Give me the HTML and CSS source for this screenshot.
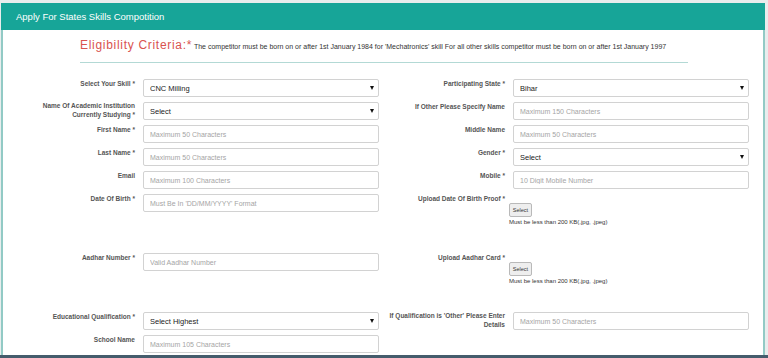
FILE: index.html
```html
<!DOCTYPE html>
<html lang="en">

<head>
    <meta charset="UTF-8">
    <meta name="viewport" content="width=device-width, initial-scale=1.0">
    <title>Apply For States Skills Compotition</title>
    <link rel="stylesheet" href="styles.css">
</head>

<body>
    <div class="panel">
        <div class="panel-head">Apply For States Skills Compotition</div>
        <div class="panel-body">
            <p class="criteria"><span class="criteria-title">Eligibility Criteria:*</span> The competitor must be born on or after 1st January 1984 for 'Mechatronics' skill For all other skills competitor must be born on or after 1st January 1997</p>
            <hr class="criteria-line">

            <form class="form">
                <!-- linha 1 -->
                <div class="field">
                    <label>Select Your Skill *</label>
                    <div class="control select-wrap">
                        <select class="input select">
                            <option>CNC Milling</option>
                        </select>
                    </div>
                </div>
                <div class="field">
                    <label>Participating State *</label>
                    <div class="control select-wrap">
                        <select class="input select">
                            <option>Bihar</option>
                        </select>
                    </div>
                </div>

                <!-- linha 2 -->
                <div class="field">
                    <label class="two-lines">Name Of Academic Institution Currently Studying *</label>
                    <div class="control select-wrap">
                        <select class="input select">
                            <option>Select</option>
                        </select>
                    </div>
                </div>
                <div class="field">
                    <label>If Other Please Specify Name</label>
                    <div class="control">
                        <input type="text" class="input" placeholder="Maximum 150 Characters">
                    </div>
                </div>

                <!-- linha 3 -->
                <div class="field">
                    <label>First Name *</label>
                    <div class="control">
                        <input type="text" class="input" placeholder="Maximum 50 Characters">
                    </div>
                </div>
                <div class="field">
                    <label>Middle Name</label>
                    <div class="control">
                        <input type="text" class="input" placeholder="Maximum 50 Characters">
                    </div>
                </div>

                <!-- linha 4 -->
                <div class="field">
                    <label>Last Name *</label>
                    <div class="control">
                        <input type="text" class="input" placeholder="Maximum 50 Characters">
                    </div>
                </div>
                <div class="field">
                    <label>Gender *</label>
                    <div class="control select-wrap">
                        <select class="input select">
                            <option>Select</option>
                        </select>
                    </div>
                </div>

                <!-- linha 5 -->
                <div class="field">
                    <label>Email</label>
                    <div class="control">
                        <input type="text" class="input" placeholder="Maximum 100 Characters">
                    </div>
                </div>
                <div class="field">
                    <label>Mobile *</label>
                    <div class="control">
                        <input type="text" class="input" placeholder="10 Digit Mobile Number">
                    </div>
                </div>

                <!-- linha 6 -->
                <div class="field tall">
                    <label>Date Of Birth *</label>
                    <div class="control">
                        <input type="text" class="input" placeholder="Must Be In 'DD/MM/YYYY' Format">
                    </div>
                </div>
                <div class="field tall">
                    <label>Upload Date Of Birth Proof *</label>
                    <div class="control upload">
                        <button type="button" class="btn-select">Select</button>
                        <span class="help">Must be less than 200 KB(.jpg, .jpeg)</span>
                    </div>
                </div>

                <!-- linha 7 -->
                <div class="field tall">
                    <label>Aadhar Number *</label>
                    <div class="control">
                        <input type="text" class="input" placeholder="Valid Aadhar Number">
                    </div>
                </div>
                <div class="field tall">
                    <label>Upload Aadhar Card *</label>
                    <div class="control upload">
                        <button type="button" class="btn-select">Select</button>
                        <span class="help">Must be less than 200 KB(.jpg, .jpeg)</span>
                    </div>
                </div>

                <!-- linha 8 -->
                <div class="field">
                    <label>Educational Qualification *</label>
                    <div class="control select-wrap">
                        <select class="input select">
                            <option>Select Highest</option>
                        </select>
                    </div>
                </div>
                <div class="field">
                    <label class="two-lines">If Qualification is 'Other' Please Enter Details</label>
                    <div class="control">
                        <input type="text" class="input" placeholder="Maximum 50 Characters">
                    </div>
                </div>

                <!-- linha 9 -->
                <div class="field">
                    <label>School Name</label>
                    <div class="control">
                        <input type="text" class="input" placeholder="Maximum 105 Characters">
                    </div>
                </div>
            </form>
        </div>
    </div>
    <div class="bottom-bar"></div>
</body>

</html>
```

FILE: styles.css
```css
body {
    margin: 0;
    background: #e8eded;
    font-family: "Liberation Sans", Arial, sans-serif;
    color: #333;
    overflow: hidden;
    height: 358px;
}

.panel {
    margin: 3px 3px 0 1px;
}

.panel-head {
    background-color: #17a598;
    color: #fff;
    height: 27px;
    line-height: 27px;
    padding-left: 15px;
    font-size: 9.5px;
}

.panel-body {
    background-color: #fff;
    border-left: 2px solid #92cac5;
    border-right: 2px solid #92cac5;
    padding: 9px 0 20px 0;
}

.criteria {
    margin: 0 0 0 77px;
    font-size: 7px;
    line-height: 12px;
    color: #333;
}

.criteria-title {
    color: #d9534f;
    font-size: 12px;
    letter-spacing: 0.7px;
}

.criteria-line {
    margin: 9px 0 0 77px;
    width: 608px;
    border: none;
    border-top: 1px solid #b3d9d5;
}

.form {
    display: grid;
    grid-template-columns: 370px 371px;
    padding: 16px 0 0 11px;
}

.field {
    display: flex;
    min-height: 23px;
}

.field.tall {
    min-height: 59px;
}

.field label {
    flex: 0 0 121px;
    margin-right: 8px;
    text-align: right;
    font-size: 6.5px;
    font-weight: bold;
    line-height: 8px;
    padding-top: 1px;
    color: #555;
}

.field label.two-lines {
    padding-top: 0;
    line-height: 8.5px;
}

.control {
    flex: 0 0 236px;
}

.input {
    display: block;
    box-sizing: border-box;
    width: 100%;
    height: 18px;
    padding: 0 6px;
    border: 1px solid #d2d2d2;
    border-radius: 2px;
    background-color: #fff;
    font-family: inherit;
    font-size: 7px;
    color: #333;
    outline: none;
}

.input::placeholder {
    color: #a5a5a5;
}

.select {
    appearance: none;
    -webkit-appearance: none;
    font-size: 7.5px;
    color: #222;
}

.select-wrap {
    position: relative;
}

.select-wrap::after {
    content: "";
    position: absolute;
    right: 5px;
    top: 7px;
    border-left: 2.5px solid transparent;
    border-right: 2.5px solid transparent;
    border-top: 4px solid #111;
}

.upload {
    margin-left: -4px;
    padding-top: 9px;
}

.btn-select {
    display: block;
    width: 23px;
    height: 14px;
    padding: 0;
    border: 1px solid #b9b9b9;
    border-radius: 2px;
    background-color: #eeeeee;
    font-family: inherit;
    font-size: 5.5px;
    color: #333;
}

.help {
    display: block;
    margin-top: 2px;
    font-size: 6px;
    color: #333;
}

.bottom-bar {
    position: fixed;
    left: 0;
    right: 0;
    bottom: 0;
    height: 3px;
    background-color: #455c6c;
}
```
